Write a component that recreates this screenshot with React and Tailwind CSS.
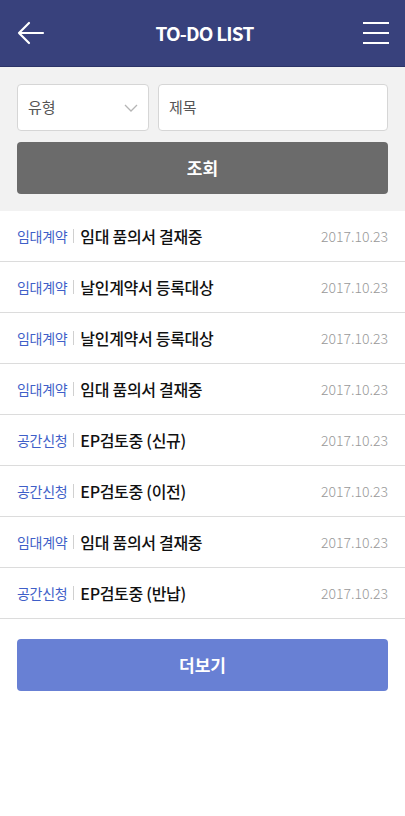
import React from 'react';

const items = [
  { type: '임대계약', title: '임대 품의서 결재중', date: '2017.10.23' },
  { type: '임대계약', title: '날인계약서 등록대상', date: '2017.10.23' },
  { type: '임대계약', title: '날인계약서 등록대상', date: '2017.10.23' },
  { type: '임대계약', title: '임대 품의서 결재중', date: '2017.10.23' },
  { type: '공간신청', title: 'EP검토중 (신규)', date: '2017.10.23' },
  { type: '공간신청', title: 'EP검토중 (이전)', date: '2017.10.23' },
  { type: '임대계약', title: '임대 품의서 결재중', date: '2017.10.23' },
  { type: '공간신청', title: 'EP검토중 (반납)', date: '2017.10.23' },
];

const font = { fontFamily: '"Noto Sans CJK KR", "Noto Sans", sans-serif' };

export default function App() {
  return (
    <div className="w-[405px] min-h-[816px] bg-white" style={font}>
      {/* Header */}
      <header className="h-[67px] bg-[#38417c] border-b border-[#2c3468] flex items-center justify-between px-[16px]">
        <button className="w-[30px] h-[30px] flex items-center justify-center">
          <svg width="28" height="24" viewBox="0 0 28 24" fill="none" stroke="white" strokeWidth="2.2" strokeLinecap="round" strokeLinejoin="round">
            <path d="M26 12H2M12 2L2 12l10 10" />
          </svg>
        </button>
        <h1 className="text-white text-[19px] font-bold tracking-[-0.8px]">TO-DO LIST</h1>
        <button className="w-[26px] flex flex-col gap-[7.5px]">
          <span className="block h-[2.5px] bg-white" />
          <span className="block h-[2.5px] bg-white" />
          <span className="block h-[2.5px] bg-white" />
        </button>
      </header>

      {/* Filter */}
      <div className="bg-[#f2f2f2] px-[17px] pt-[17px] pb-[17px]">
        <div className="flex gap-[9px]">
          <div className="w-[132px] h-[47px] bg-white border border-[#d6d6d6] rounded-[4px] flex items-center justify-between pl-[10px] pr-[10px]">
            <span className="text-[15px] text-[#555]">유형</span>
            <svg width="14" height="8" viewBox="0 0 14 8" fill="none" stroke="#b5b5b5" strokeWidth="1.3">
              <path d="M1 1l6 6 6-6" />
            </svg>
          </div>
          <div className="flex-1 h-[47px] bg-white border border-[#d6d6d6] rounded-[4px] flex items-center pl-[10px]">
            <span className="text-[15px] text-[#555]">제목</span>
          </div>
        </div>
        <button className="mt-[11px] w-full h-[52px] bg-[#6b6b6b] rounded-[4px] text-white text-[17px] font-bold">
          조회
        </button>
      </div>

      {/* List */}
      <ul>
        {items.map((it, i) => (
          <li key={i} className="h-[51px] border-b border-[#dcdcdc] flex items-center px-[17px]">
            <span className="text-[14px] text-[#3f5fc8] tracking-[-0.3px]">{it.type}</span>
            <span className="mx-[6px] w-px h-[14px] bg-[#d0d0d0]" />
            <span className="text-[16px] text-[#111] font-medium tracking-[-0.3px]">{it.title}</span>
            <span className="ml-auto text-[14px] text-[#999] font-light">{it.date}</span>
          </li>
        ))}
      </ul>

      <div className="px-[17px] pt-[20px]">
        <button className="w-full h-[52px] bg-[#6880d4] rounded-[4px] text-white text-[17px] font-bold">
          더보기
        </button>
      </div>
    </div>
  );
}
